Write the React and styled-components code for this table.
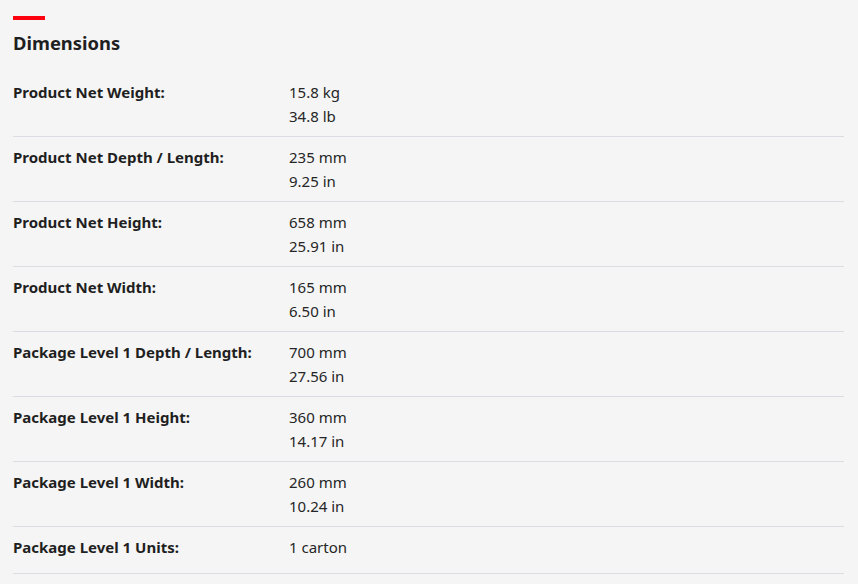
import React from "react";
import styled, { createGlobalStyle } from "styled-components";

const GlobalStyle = createGlobalStyle`
  html, body {
    margin: 0;
    padding: 0;
    background: #f5f5f5;
  }
  body {
    font-family: "Noto Sans", "Open Sans", Arial, sans-serif;
    color: #262626;
  }
`;

const Section = styled.section`
  padding: 16px 14px 0 13px;
`;

const Accent = styled.div`
  width: 32px;
  height: 4px;
  background: #ff000f;
`;

const Title = styled.h2`
  margin: 11px 0 0;
  font-size: 18.4px;
  line-height: 24px;
  font-weight: 700;
  color: #1f1f1f;
`;

const Table = styled.div`
  margin-top: 25px;
`;

const Row = styled.div`
  display: grid;
  grid-template-columns: 276px 1fr;
  padding: ${(p) => (p.$single ? "8px 0 14px" : "8px 0 8px")};
  border-bottom: 1px solid #dcdde2;
  &:first-child {
    padding-top: 0;
  }
`;

const Label = styled.div`
  font-size: 15px;
  line-height: 24px;
  font-weight: 700;
  color: #1f1f1f;
`;

const Value = styled.div`
  font-size: 15px;
  line-height: 24px;
  color: #262626;
`;

const rows = [
  ["Product Net Weight:", ["15.8 kg", "34.8 lb"]],
  ["Product Net Depth / Length:", ["235 mm", "9.25 in"]],
  ["Product Net Height:", ["658 mm", "25.91 in"]],
  ["Product Net Width:", ["165 mm", "6.50 in"]],
  ["Package Level 1 Depth / Length:", ["700 mm", "27.56 in"]],
  ["Package Level 1 Height:", ["360 mm", "14.17 in"]],
  ["Package Level 1 Width:", ["260 mm", "10.24 in"]],
  ["Package Level 1 Units:", ["1 carton"]],
];

export default function App() {
  return (
    <>
      <GlobalStyle />
      <Section>
        <Accent />
        <Title>Dimensions</Title>
        <Table>
          {rows.map(([label, values]) => (
            <Row key={label} $single={values.length === 1}>
              <Label>{label}</Label>
              <Value>
                {values.map((v) => (
                  <div key={v}>{v}</div>
                ))}
              </Value>
            </Row>
          ))}
        </Table>
      </Section>
    </>
  );
}
